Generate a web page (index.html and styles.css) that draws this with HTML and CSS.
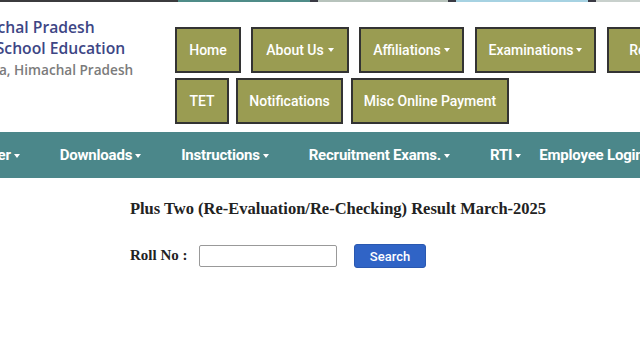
FILE: index.html
```html
<!DOCTYPE html>
<html>
<head>
<meta charset="utf-8">
<link rel="stylesheet" href="styles.css">
</head>
<body>
<div class="strip">
  <span class="seg seg-dark1"></span>
  <span class="seg seg-teal"></span>
  <span class="seg seg-sep"></span>
  <span class="seg seg-sage"></span>
  <span class="seg seg-sep"></span>
  <span class="seg seg-sky"></span>
  <span class="seg seg-sep"></span>
  <span class="seg seg-rest"></span>
</div>
<header class="header">
  <div class="logo">
    <div class="logo-text">
      <div class="logo-line">Himachal Pradesh</div>
      <div class="logo-line">Board of School Education</div>
      <div class="logo-sub">Dharamshala, Himachal Pradesh</div>
    </div>
  </div>
  <nav class="topnav">
    <div class="btn-row">
      <a class="tbtn b-home">Home</a>
      <a class="tbtn b-about">About Us <span class="caret"></span></a>
      <a class="tbtn b-aff">Affiliations<span class="caret"></span></a>
      <a class="tbtn b-exam">Examinations<span class="caret"></span></a>
      <a class="tbtn b-res">Results<span class="caret"></span></a>
    </div>
    <div class="btn-row">
      <a class="tbtn b-tet">TET</a>
      <a class="tbtn b-notif">Notifications</a>
      <a class="tbtn b-misc">Misc Online Payment</a>
    </div>
  </nav>
</header>
<nav class="mainnav">
  <a class="mitem m-first">Career<span class="caret"></span></a>
  <a class="mitem">Downloads<span class="caret"></span></a>
  <a class="mitem">Instructions<span class="caret"></span></a>
  <a class="mitem">Recruitment Exams.<span class="caret c-wide"></span></a>
  <a class="mitem m-rti">RTI<span class="caret"></span></a>
  <a class="mitem m-last">Employee Login</a>
</nav>
<main class="content">
  <h1 class="title">Plus Two (Re-Evaluation/Re-Checking) Result March-2025</h1>
  <form class="form-row">
    <label class="roll-label">Roll No :</label>
    <input class="roll-input" type="text">
    <button class="search-btn" type="button">Search</button>
  </form>
</main>
</body>
</html>
```

FILE: styles.css
```css
html, body {
  margin: 0;
  padding: 0;
  background: #fff;
  overflow: hidden;
  width: 640px;
  height: 360px;
}
body {
  font-family: Roboto, "Liberation Sans", sans-serif;
}

.strip {
  display: flex;
  height: 2px;
}
.seg { display: block; height: 2px; }
.seg-dark1 { width: 178px; background: #3b3b3d; }
.seg-teal { width: 132px; background: #4f8c88; }
.seg-sep { width: 8px; background: #3a3a44; }
.seg-sage { width: 130px; background: #b7c3bc; }
.seg-sky { width: 132px; background: #a6d2e2; }
.seg-rest { flex: 1; background: #c8d0cc; }

.header {
  display: flex;
  height: 130px;
}
.logo {
  width: 175px;
  flex: none;
}
.logo-text {
  width: 240px;
  margin-left: -94px;
  padding-top: 15px;
  text-align: center;
  white-space: nowrap;
  font-family: "Open Sans", "Noto Sans", sans-serif;
  font-weight: 600;
}
.logo-line {
  font-size: 15.7px;
  line-height: 21px;
  color: #3d4685;
}
.logo-sub {
  font-size: 13.6px;
  line-height: 22px;
  color: #7b7b7b;
}

.topnav {
  display: flex;
  flex-direction: column;
  gap: 5px;
  padding-top: 25px;
}
.btn-row {
  display: flex;
  gap: 10px;
}
.tbtn {
  display: flex;
  align-items: center;
  justify-content: center;
  height: 46px;
  box-sizing: border-box;
  border: 2px solid #333;
  background: #9a9c52;
  color: #fff;
  font-size: 14px;
  font-weight: 500;
  white-space: nowrap;
}
.b-home { width: 66px; }
.b-about { width: 98px; }
.b-aff { width: 105px; }
.b-exam { width: 121px; margin-left: 1px; }
.b-res { width: 100px; margin-left: 1px; }
.b-tet { width: 54px; }
.b-notif { width: 107px; margin-left: -3px; }
.b-misc { width: 158px; margin-left: -2px; }

.caret {
  display: inline-block;
  width: 0;
  height: 0;
  margin-left: 3px;
  border-top: 4px solid #fff;
  border-left: 3.5px solid transparent;
  border-right: 3.5px solid transparent;
  vertical-align: middle;
}
.b-about .caret { margin-left: 4px; }

.mainnav {
  display: flex;
  align-items: center;
  height: 46px;
  background: #4b878a;
  white-space: nowrap;
}
.mitem {
  color: #fff;
  font-size: 15px;
  font-weight: 700;
  padding: 0 20px;
  letter-spacing: -0.2px;
}
.mitem .caret { margin-left: 3px; }
.m-first { margin-left: -53px; }
.m-rti { padding-right: 18px; }
.m-last { padding-left: 0; }

.content {
  padding-top: 21px;
}
.title {
  margin: 0;
  padding-left: 36px;
  text-align: center;
  font-family: "Liberation Serif", serif;
  font-size: 16.5px;
  font-weight: 700;
  color: #222;
}
.form-row {
  display: flex;
  align-items: center;
  margin: 0;
  padding: 25px 0 0 130px;
}
.roll-label {
  font-family: "Liberation Serif", serif;
  font-size: 15px;
  font-weight: 700;
  color: #222;
  width: 69px;
  margin-bottom: 2px;
}
.roll-input {
  width: 138px;
  height: 22px;
  box-sizing: border-box;
  border: 1px solid #999;
  border-radius: 2px;
  padding: 0 4px;
  margin: 0;
}
.search-btn {
  margin-left: 17px;
  width: 72px;
  height: 24px;
  box-sizing: border-box;
  border: 1px solid #2a58b0;
  border-radius: 3px;
  background: #3064c6;
  color: #fff;
  font-family: Roboto, "Liberation Sans", sans-serif;
  font-size: 13px;
  font-weight: 500;
  padding: 0;
}
```
